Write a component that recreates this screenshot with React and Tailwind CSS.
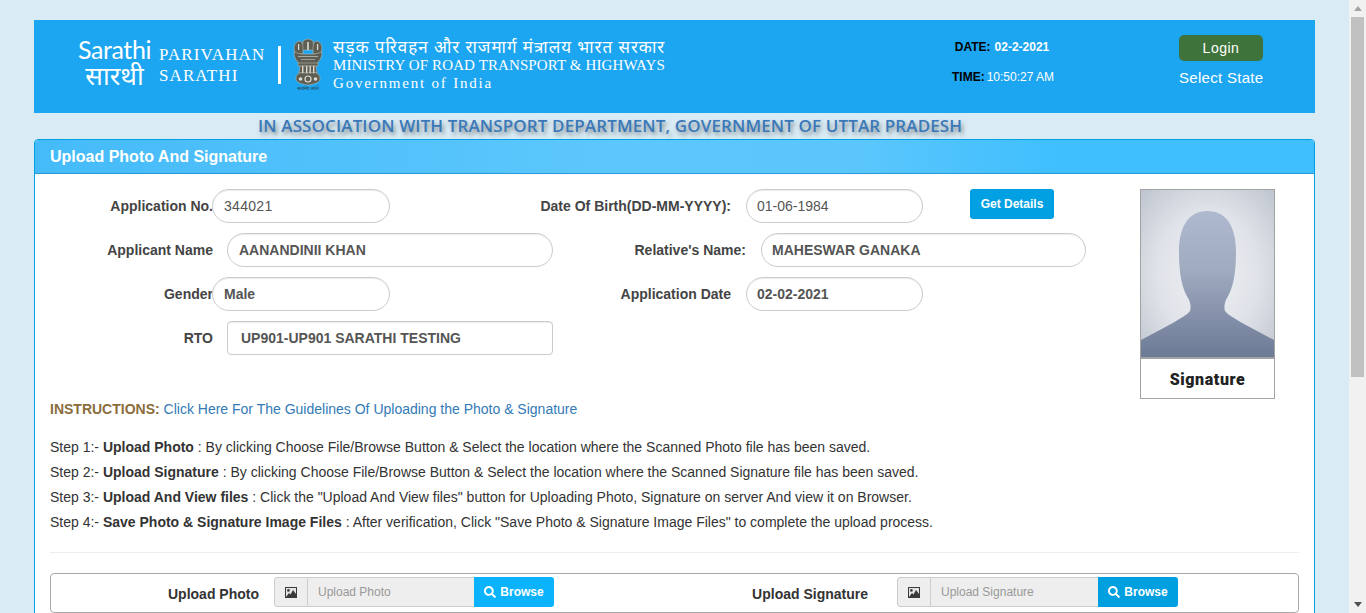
import { FaSearch } from "react-icons/fa";

const font = "font-['Liberation_Sans',Arial,sans-serif]";
const serif = "font-['Liberation_Serif','Times_New_Roman',serif]";

function Emblem() {
  // rough drawing of the state emblem
  return (
    <svg width="30" height="54" viewBox="0 0 30 54" className="shrink-0">
      <g fill="#5e5e55" stroke="#c4c2b3" strokeWidth="0.5">
        <path d="M10 3 Q15 -1 20 3 L21 12 L9 12 Z" />
        <path d="M1 10 Q1 4 7 3 Q10 4 10 9 L10 16 L2 16 Z" />
        <path d="M29 10 Q29 4 23 3 Q20 4 20 9 L20 16 L28 16 Z" />
        <path d="M1 14 Q1 22 7 26 L23 26 Q29 22 29 14 Q22 17 15 16 Q8 17 1 14 Z" />
        <rect x="5" y="25" width="20" height="3" />
        <path d="M7 28 L23 28 L24 35 L6 35 Z" />
        <path d="M6 35 L24 35 Q28 38 27 42 Q25 46 15 47 Q5 46 3 42 Q2 38 6 35 Z" />
      </g>
      <g fill="#dedccf">
        <rect x="5" y="6" width="1.2" height="6" />
        <rect x="14.2" y="4" width="1.6" height="8" />
        <rect x="24" y="6" width="1.2" height="6" />
        <rect x="5" y="18" width="20" height="1" opacity="0.6" />
        <rect x="8" y="21" width="14" height="1" opacity="0.5" />
        <rect x="9" y="28" width="1.4" height="7" />
        <rect x="13" y="28" width="1.4" height="7" />
        <rect x="16.5" y="28" width="1.4" height="7" />
        <rect x="20" y="28" width="1.4" height="7" />
        <circle cx="15" cy="41" r="3" fill="none" stroke="#dedccf" strokeWidth="1.2" />
        <circle cx="7.5" cy="41" r="1.8" />
        <circle cx="22.5" cy="41" r="1.8" />
      </g>
      <text x="15" y="52" textAnchor="middle" fontSize="4.4" fill="#333" fontFamily="Noto Sans, sans-serif">सत्यमेव जयते</text>
    </svg>
  );
}

function PictureIcon() {
  return (
    <svg width="12" height="11" viewBox="0 0 12 11">
      <rect width="12" height="11" fill="#3a3a3a" />
      <rect x="1" y="1" width="10" height="9" fill="#e4e4e4" />
      <circle cx="3.4" cy="3.4" r="1.3" fill="#3a3a3a" />
      <path d="M1 10 L4 6 L5.5 7.5 L8 3 L11 7 L11 10 Z" fill="#3a3a3a" />
    </svg>
  );
}

function Portrait() {
  return (
    <svg width="133" height="167" viewBox="0 0 133 167" className="block">
      <defs>
        <radialGradient id="halo" cx="50%" cy="50%" r="70%">
          <stop offset="0%" stopColor="#eef0f3" />
          <stop offset="55%" stopColor="#dfe2e8" />
          <stop offset="100%" stopColor="#bfc5cf" />
        </radialGradient>
        <linearGradient id="body" x1="0" y1="0" x2="0" y2="1">
          <stop offset="0%" stopColor="#aeb9cf" />
          <stop offset="40%" stopColor="#a0abc0" />
          <stop offset="100%" stopColor="#6d7a96" />
        </linearGradient>
      </defs>
      <rect width="133" height="167" fill="url(#halo)" />
      <path
        d="M66.5 21 C48 21 38 36 38 62 C38 84 41 98 47 108 C50 113 50 118 49 121 C46 125 40 128 30 134 L0 150 L0 167 L133 167 L133 150 L103 134 C93 128 87 125 84 121 C83 118 83 113 86 108 C92 98 95 84 95 62 C95 36 85 21 66.5 21 Z"
        fill="url(#body)"
      />
    </svg>
  );
}

function RoundInput({ value, width, bold, square, pad }) {
  return (
    <div
      className={`h-[34px] ${width} ${square ? "rounded-[4px] pl-[13px]" : `rounded-[17px] ${pad || "pl-[11px]"}`} border border-[#cccccc] bg-white flex items-center text-[14px] text-[#555555] shadow-[inset_0_1px_1px_rgba(0,0,0,0.075)] ${bold ? "font-bold" : ""}`}
    >
      {value}
    </div>
  );
}

function Label({ children, width }) {
  return <div className={`${width} shrink-0 whitespace-nowrap text-right text-[14px] font-bold text-[#444444]`}>{children}</div>;
}

function UploadGroup({ label, labelWidth, inputWidth, browseColor, marginLeft, gap }) {
  return (
    <div className={`flex items-center ${marginLeft}`}>
      <div className={`${labelWidth} text-right text-[14px] font-bold text-[#333333] pt-[4px]`}>{label}</div>
      <div className={`${gap} flex h-[30px] items-stretch text-[12px]`}>
        <div className="w-[34px] flex items-center justify-center bg-[#eeeeee] border border-[#cccccc] rounded-l-[3px]">
          <PictureIcon />
        </div>
        <div className={`${inputWidth} flex items-center pl-[10px] bg-[#eeeeee] border-y border-[#cccccc] text-[#999999]`}>
          {label}
        </div>
        <div className={`w-[80px] flex items-center justify-center gap-[4px] rounded-r-[3px] text-white font-bold ${browseColor}`}>
          <FaSearch size={12} />
          Browse
        </div>
      </div>
    </div>
  );
}

export default function App() {
  return (
    <div className={`flex h-[613px] overflow-hidden bg-[#d9ecf6] ${font}`}>
      <div className="w-[1349px] shrink-0 px-[34px] pt-[20px]">
        {/* Top banner */}
        <header className="h-[93px] bg-[#1ca5f0] flex items-start text-white">
          <div className="ml-[45px] mt-[17px] w-[71px] h-[50px] flex flex-col items-center leading-none font-['Lato',sans-serif] whitespace-nowrap">
            <span className="text-[25px] tracking-[-0.4px] h-[25px]">Sarathi</span>
            <span className="text-[26px] h-[25px] font-['Noto_Sans',sans-serif]">सारथी</span>
          </div>
          <div className={`ml-[9px] mt-[24px] w-[106px] ${serif} text-[17px] leading-[21px] tracking-[1.1px] whitespace-nowrap`}>
            <div>PARIVAHAN</div>
            <div>SARATHI</div>
          </div>
          <div className="ml-[13px] mt-[26px] w-[3px] h-[38px] bg-white" />
          <div className="ml-[12px] mt-[18px]"><Emblem /></div>
          <div className={`ml-[10px] mt-[17px] w-[332px] ${serif}`}>
            <div className="text-[17px] leading-[20px] tracking-[0.95px] whitespace-nowrap font-['Noto_Sans',serif]">सड़क परिवहन और राजमार्ग मंत्रालय भारत सरकार</div>
            <div className="text-[15px] leading-[17px] tracking-[0.11px] whitespace-nowrap">MINISTRY OF ROAD TRANSPORT &amp; HIGHWAYS</div>
            <div className="text-[15px] leading-[18px] tracking-[1.8px] whitespace-nowrap">Government of India</div>
          </div>
          <div className="ml-[283px] mt-[20px] w-[110px] text-[12px] font-bold">
            <div className="h-[14px] pr-[2px] flex items-center justify-center gap-[4px]">
              <span className="text-black">DATE:</span>
              <span>02-2-2021</span>
            </div>
            <div className="mt-[16px] h-[14px] flex items-center justify-center gap-[2px]">
              <span className="text-black">TIME:</span>
              <span className="font-normal">10:50:27 AM</span>
            </div>
          </div>
          <div className="ml-[121px] mt-[15px] w-[84px] text-center">
            <div className="h-[26px] rounded-[5px] bg-[#3e743c] text-[14px] flex items-center justify-center tracking-[0.5px]">Login</div>
            <div className="mt-[8px] text-[15px] leading-[18px] tracking-[0.3px] whitespace-nowrap">Select State</div>
          </div>
        </header>

        {/* Association line */}
        <div className="h-[26px] pl-[224px] pb-[1px] flex items-center whitespace-nowrap font-['Open_Sans',sans-serif] font-semibold text-[17px] tracking-[0.12px] text-[#3a78b8] [text-shadow:2px_3px_4px_rgba(60,60,60,0.55)]">
          IN ASSOCIATION WITH TRANSPORT DEPARTMENT, GOVERNMENT OF UTTAR PRADESH
        </div>

        {/* Panel */}
        <section className="h-[600px] border border-[#00a0e3] rounded-t-[4px] bg-white">
          <div className="h-[34px] pl-[15px] flex items-center border-b border-[#2a97d6] bg-[linear-gradient(90deg,#45bbf9_0%,#5cc7fc_45%,#5ac6fc_65%,#3fbffe_80%,#3fbffe_100%)] rounded-t-[3px] text-white text-[16px] font-bold">
            Upload Photo And Signature
          </div>

          <div className="px-[15px] pt-[15px]">
            <div className="flex">
              <div className="w-[1090px] shrink-0 flex flex-col gap-[10px]">
                <div className="flex items-center">
                  <Label width="w-[163px]">Application No.</Label>
                  <div className="-ml-[1px]"><RoundInput value="344021" width="w-[178px] tracking-[0.3px]" /></div>
                  <Label width="ml-[150px] w-[191px]">Date Of Birth(DD-MM-YYYY):</Label>
                  <div className="ml-[15px]"><RoundInput value="01-06-1984" width="w-[177px]" pad="pl-[10px]" /></div>
                  <button className="ml-[47px] self-start w-[84px] h-[30px] rounded-[3px] bg-[#00a0e3] text-white text-[12px] font-bold">Get Details</button>
                </div>
                <div className="flex items-center">
                  <Label width="w-[163px]">Applicant Name</Label>
                  <div className="ml-[14px]"><RoundInput value="AANANDINII KHAN" width="w-[326px]" bold /></div>
                  <Label width="w-[193px]">Relative's Name:</Label>
                  <div className="ml-[15px]"><RoundInput value="MAHESWAR GANAKA" width="w-[325px]" bold pad="pl-[10px]" /></div>
                </div>
                <div className="flex items-center">
                  <Label width="w-[163px]">Gender</Label>
                  <div className="-ml-[1px]"><RoundInput value="Male" width="w-[178px]" bold /></div>
                  <Label width="ml-[163px] w-[178px]">Application Date</Label>
                  <div className="ml-[15px]"><RoundInput value="02-02-2021" width="w-[177px]" bold pad="pl-[10px]" /></div>
                </div>
                <div className="flex items-center">
                  <Label width="w-[163px]">RTO</Label>
                  <div className="ml-[14px]"><RoundInput value="UP901-UP901 SARATHI TESTING" width="w-[326px]" bold square /></div>
                </div>
              </div>
              <div className="w-[135px] h-[210px] border border-[#a3a3a3] flex flex-col">
                <Portrait />
                <div className="flex-1 pt-[2px] border-t-2 border-[#a3a3a3] flex items-center justify-center text-[#222222] font-['Roboto',sans-serif] font-black text-[16px] tracking-[0.6px]">Signature</div>
              </div>
            </div>

            <div className="text-[14px]">
              <div className="h-[20px] leading-[20px]">
                <span className="font-bold text-[#8a6d3b]">INSTRUCTIONS: </span>
                <span className="text-[#337ab7]">Click Here For The Guidelines Of Uploading the Photo &amp; Signature</span>
              </div>
              <div className="mt-[16px] text-[#333333] leading-[25px]">
                <div>Step 1:- <b>Upload Photo</b> : By clicking Choose File/Browse Button &amp; Select the location where the Scanned Photo file has been saved.</div>
                <div>Step 2:- <b>Upload Signature</b> : By clicking Choose File/Browse Button &amp; Select the location where the Scanned Signature file has been saved.</div>
                <div>Step 3:- <b>Upload And View files</b> : Click the "Upload And View files" button for Uploading Photo, Signature on server And view it on Browser.</div>
                <div>Step 4:- <b>Save Photo &amp; Signature Image Files</b> : After verification, Click "Save Photo &amp; Signature Image Files" to complete the upload process.</div>
              </div>
              <hr className="mt-[17px] border-t border-[#eeeeee]" />
              <div className="mt-[20px] h-[40px] pb-[2px] border border-[#a8a8a8] rounded-[4px] flex items-center">
                <UploadGroup label="Upload Photo" labelWidth="w-[208px]" inputWidth="w-[166px]" browseColor="bg-[#0bb3fd]" marginLeft="" gap="ml-[15px]" />
                <UploadGroup label="Upload Signature" labelWidth="w-[199px]" inputWidth="w-[167px]" browseColor="bg-[#009fe0]" marginLeft="ml-[115px]" gap="ml-[29px]" />
              </div>
            </div>
          </div>
        </section>
      </div>

      {/* Scrollbar */}
      <div className="w-[17px] shrink-0 bg-[#f1f1f1] flex flex-col">
        <div className="h-[17px] flex items-center justify-center">
          <div className="w-0 h-0 border-x-[4px] border-x-transparent border-b-[5px] border-b-[#a3a3a3]" />
        </div>
        <div className="mx-[2px] h-[360px] bg-[#c1c1c1]" />
        <div className="flex-1" />
        <div className="h-[17px] flex items-center justify-center">
          <div className="w-0 h-0 border-x-[4px] border-x-transparent border-t-[5px] border-t-[#505050]" />
        </div>
      </div>
    </div>
  );
}
